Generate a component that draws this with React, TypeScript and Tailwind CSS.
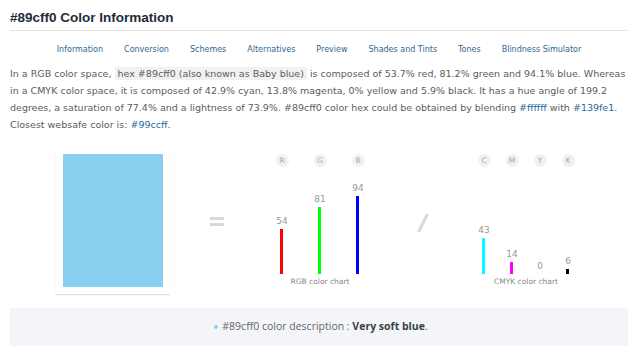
import React from "react";

const rgb = [
  { l: "R", v: 54, c: "#ff0000" },
  { l: "G", v: 81, c: "#00ff00" },
  { l: "B", v: 94, c: "#0000ff" },
];
const cmyk = [
  { l: "C", v: 43, c: "#00ffff" },
  { l: "M", v: 14, c: "#ff00ff" },
  { l: "Y", v: 0, c: "#ffff00" },
  { l: "K", v: 6, c: "#000000" },
];

function Chart({ data, col, title }: { data: { l: string; v: number; c: string }[]; col: number; title: string }) {
  return (
    <div className="flex flex-col items-center">
      <div className="flex">
        {data.map((d) => (
          <div key={d.l} className="flex flex-col items-center" style={{ width: col }}>
            <div className="w-[13px] h-[13px] rounded-full bg-[#f1f1f1] text-[#a8a8a8] text-[7.5px] leading-[13px] text-center">
              {d.l}
            </div>
            <div className="h-[107px] flex flex-col justify-end items-center">
              <div className="text-[9px] leading-[10px] text-[#999999] mb-[3px]">{d.v}</div>
              <div style={{ width: 3, height: Math.round(d.v * 0.833), background: d.c }} />
            </div>
          </div>
        ))}
      </div>
      <div className="text-[7.5px] leading-[16px] text-[#888888]">{title}</div>
    </div>
  );
}

export default function App() {
  const navs = ["Information", "Conversion", "Schemes", "Alternatives", "Preview", "Shades and Tints", "Tones", "Blindness Simulator"];
  return (
    <div className="w-[640px] h-[354px] bg-white pl-[10px] pr-[12px] font-['DejaVu_Sans',sans-serif] overflow-hidden">
      <h1 className="pt-[8px] text-[13.5px] leading-[20px] font-bold text-[#1f2b3b] font-['Liberation_Sans',Arial,sans-serif]">
        #89cff0 Color Information
      </h1>
      <div className="mt-[2px] h-px bg-[#e3e3e3]" />
      <nav className="mt-[12.5px] flex justify-center gap-[21px] text-[8px] leading-[12px] text-[#2f6693]">
        {navs.map((n) => (
          <span key={n}>{n}</span>
        ))}
      </nav>
      <p className="mt-[9px] text-[9.5px] leading-[17px] text-[#5c5c5c]">
        In a RGB color space,{" "}
        <span className="bg-[#f1f1f1] rounded-[2px] px-[3px] py-[1px]">hex #89cff0 (also known as Baby blue)</span> is composed
        of 53.7% red, 81.2% green and 94.1% blue. Whereas in a CMYK color space, it is composed of 42.9% cyan, 13.8% magenta, 0%
        yellow and 5.9% black. It has a hue angle of 199.2 degrees, a saturation of 77.4% and a lightness of 73.9%. #89cff0 color hex
        could be obtained by blending <span className="text-[#2a6a9a]">#ffffff</span> with{" "}
        <span className="text-[#2a6a9a]">#139fe1</span>. Closest websafe color is:{" "}
        <span className="text-[#2a6a9a]">#99ccff</span>.
      </p>
      <div className="mt-[14.5px] h-[147px] flex items-start">
        <div className="ml-[46px] bg-white p-[7px] shadow-[0_1px_1px_rgba(0,0,0,0.13)]">
          <div className="w-[100px] h-[133px] bg-[#89cff0]" />
        </div>
        <div className="ml-[40px] mt-[70px] flex flex-col gap-[3px]">
          <div className="w-[14px] h-[3px] bg-[#d9d9d9]" />
          <div className="w-[14px] h-[3px] bg-[#d9d9d9]" />
        </div>
        <div className="ml-[39px] mt-[7px]">
          <Chart data={rgb} col={38} title="RGB color chart" />
        </div>
        <svg className="ml-[40px] mt-[66px]" width="12" height="20" viewBox="0 0 12 20">
          <line x1="10.5" y1="1" x2="1.5" y2="19" stroke="#d9d9d9" strokeWidth="3" />
        </svg>
        <div className="ml-[41px] mt-[7px]">
          <Chart data={cmyk} col={28} title="CMYK color chart" />
        </div>
      </div>
      <div className="mt-[14px] h-[38px] bg-[#f4f5f9] flex items-center justify-center text-[10.5px] text-[#666666] font-['Open_Sans',sans-serif]">
        <span className="w-[4px] h-[4px] rounded-full bg-[#89cff0] mr-[4px] ml-[4px]" />
        <span>
          #89cff0 color description : <b className="font-bold text-[#3a3f4a]">Very soft blue</b>.
        </span>
      </div>
    </div>
  );
}
